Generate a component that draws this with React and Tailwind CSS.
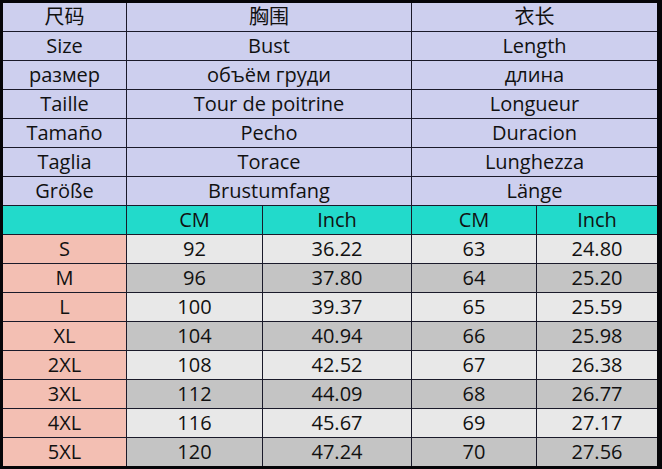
import React from "react";

const headers = [
  ["尺码", "胸围", "衣长"],
  ["Size", "Bust", "Length"],
  ["размер", "объём груди", "длина"],
  ["Taille", "Tour de poitrine", "Longueur"],
  ["Tamaño", "Pecho", "Duracion"],
  ["Taglia", "Torace", "Lunghezza"],
  ["Größe", "Brustumfang", "Länge"],
];

const rows = [
  ["S", "92", "36.22", "63", "24.80"],
  ["M", "96", "37.80", "64", "25.20"],
  ["L", "100", "39.37", "65", "25.59"],
  ["XL", "104", "40.94", "66", "25.98"],
  ["2XL", "108", "42.52", "67", "26.38"],
  ["3XL", "112", "44.09", "68", "26.77"],
  ["4XL", "116", "45.67", "69", "27.17"],
  ["5XL", "120", "47.24", "70", "27.56"],
];

const cell = "flex items-center justify-center leading-none";

export default function App() {
  return (
    <div
      className="w-[662px] h-[469px] bg-[#0b0b10] border-l-[3px] border-t-[3px] border-r-[5px] border-b-[3px] border-[#050508] text-[20px] text-[#111]"
      style={{ fontFamily: '"Open Sans", "Noto Sans CJK SC", sans-serif' }}
    >
      <div className="grid grid-cols-[123px_135px_148px_124px_120px] auto-rows-[28px] gap-px bg-[#1a1a2a]">
        {headers.map((h, i) => (
          <React.Fragment key={i}>
            <div className={`${cell} bg-[#cdcfee]`}>{h[0]}</div>
            <div className={`${cell} col-span-2 bg-[#cdcfee]`}>{h[1]}</div>
            <div className={`${cell} col-span-2 bg-[#cdcfee]`}>{h[2]}</div>
          </React.Fragment>
        ))}
        <div className={`${cell} bg-[#22dacb]`}></div>
        <div className={`${cell} bg-[#22dacb]`}>CM</div>
        <div className={`${cell} bg-[#22dacb]`}>Inch</div>
        <div className={`${cell} bg-[#22dacb]`}>CM</div>
        <div className={`${cell} bg-[#22dacb]`}>Inch</div>
        {rows.map((r, i) => {
          const bg = i % 2 === 0 ? "bg-[#e8e8e8]" : "bg-[#c4c4c4]";
          return (
            <React.Fragment key={r[0]}>
              <div className={`${cell} bg-[#f3bfb3]`}>{r[0]}</div>
              <div className={`${cell} ${bg}`}>{r[1]}</div>
              <div className={`${cell} ${bg}`}>{r[2]}</div>
              <div className={`${cell} ${bg}`}>{r[3]}</div>
              <div className={`${cell} ${bg}`}>{r[4]}</div>
            </React.Fragment>
          );
        })}
      </div>
    </div>
  );
}
